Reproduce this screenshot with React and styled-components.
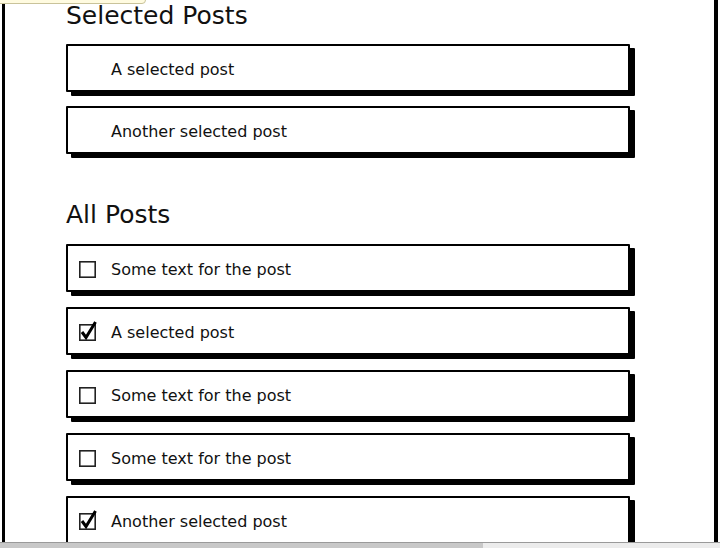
import React from 'react';
import styled, { createGlobalStyle } from 'styled-components';

const GlobalStyle = createGlobalStyle`
  html, body {
    margin: 0;
    padding: 0;
    background: #ffffff;
    font-family: "DejaVu Sans", "Liberation Sans", sans-serif;
    color: #111111;
  }
`;

const Page = styled.div`
  position: relative;
  width: 720px;
  height: 548px;
  overflow: hidden;
  display: flex;
  flex-direction: column;
`;

const Frame = styled.div`
  height: 543px;
  margin-left: 2px;
  width: 716px;
  box-sizing: border-box;
  border-left: 3px solid #000;
  border-right: 4px solid #000;
  padding-left: 61px;
  overflow: hidden;
`;

const Notice = styled.div`
  position: absolute;
  top: -4px;
  left: -4px;
  width: 148px;
  height: 6px;
  background: #fffbe0;
  border: 1px solid #c9c39a;
  border-radius: 0 0 4px 0;
`;

const ScrollBar = styled.div`
  height: 5px;
  display: flex;
  border-top: 1px solid #9a9a9a;
  background: #ececec;
`;

const ScrollThumb = styled.div`
  width: 483px;
  background: #c8c8c8;
`;

const Heading = styled.h2`
  margin: 0;
  font-size: 25px;
  font-weight: normal;
  line-height: 29px;
  color: #111;
`;

const Section = styled.section`
  display: flex;
  flex-direction: column;
  padding-top: ${p => p.$top}px;
`;

const List = styled.div`
  display: flex;
  flex-direction: column;
  gap: ${p => p.$gap}px;
  margin-top: ${p => p.$top}px;
`;

const Card = styled.div`
  box-sizing: border-box;
  width: 564px;
  height: 48px;
  border: 2px solid #000;
  border-radius: 1px;
  box-shadow: 5px 4px 0 #000;
  background: #fff;
  display: flex;
  align-items: center;
  padding-left: ${p => (p.$check ? 10 : 43)}px;
  padding-top: 2px;
  gap: 14px;
  font-size: 16px;
  color: #111;
`;

const Box = styled.svg`
  width: 19px;
  height: 22px;
  margin-top: -5px;
  flex: none;
`;

function CheckBox({ checked }) {
  return (
    <Box viewBox="0 0 19 22">
      <rect x="1.8" y="5.8" width="15.4" height="15.4" fill="#fff" stroke="#222" strokeWidth="1.6" />
      {checked && (
        <path d="M4 13 L8 18.5 L17.5 3" fill="none" stroke="#000" strokeWidth="3" strokeLinejoin="miter" />
      )}
    </Box>
  );
}

const selected = ['A selected post', 'Another selected post'];

const posts = [
  { text: 'Some text for the post', checked: false },
  { text: 'A selected post', checked: true },
  { text: 'Some text for the post', checked: false },
  { text: 'Some text for the post', checked: false },
  { text: 'Another selected post', checked: true },
];

export default function App() {
  return (
    <Page>
      <GlobalStyle />
      <Frame>
        <Section $top={1}>
          <Heading>Selected Posts</Heading>
          <List $top={14} $gap={14}>
            {selected.map((s, i) => (
              <Card key={i}>{s}</Card>
            ))}
          </List>
        </Section>
        <Section $top={46}>
          <Heading>All Posts</Heading>
          <List $top={15} $gap={15}>
            {posts.map((p, i) => (
              <Card key={i} $check>
                <CheckBox checked={p.checked} />
                {p.text}
              </Card>
            ))}
          </List>
        </Section>
      </Frame>
      <ScrollBar>
        <ScrollThumb />
      </ScrollBar>
      <Notice />
    </Page>
  );
}
